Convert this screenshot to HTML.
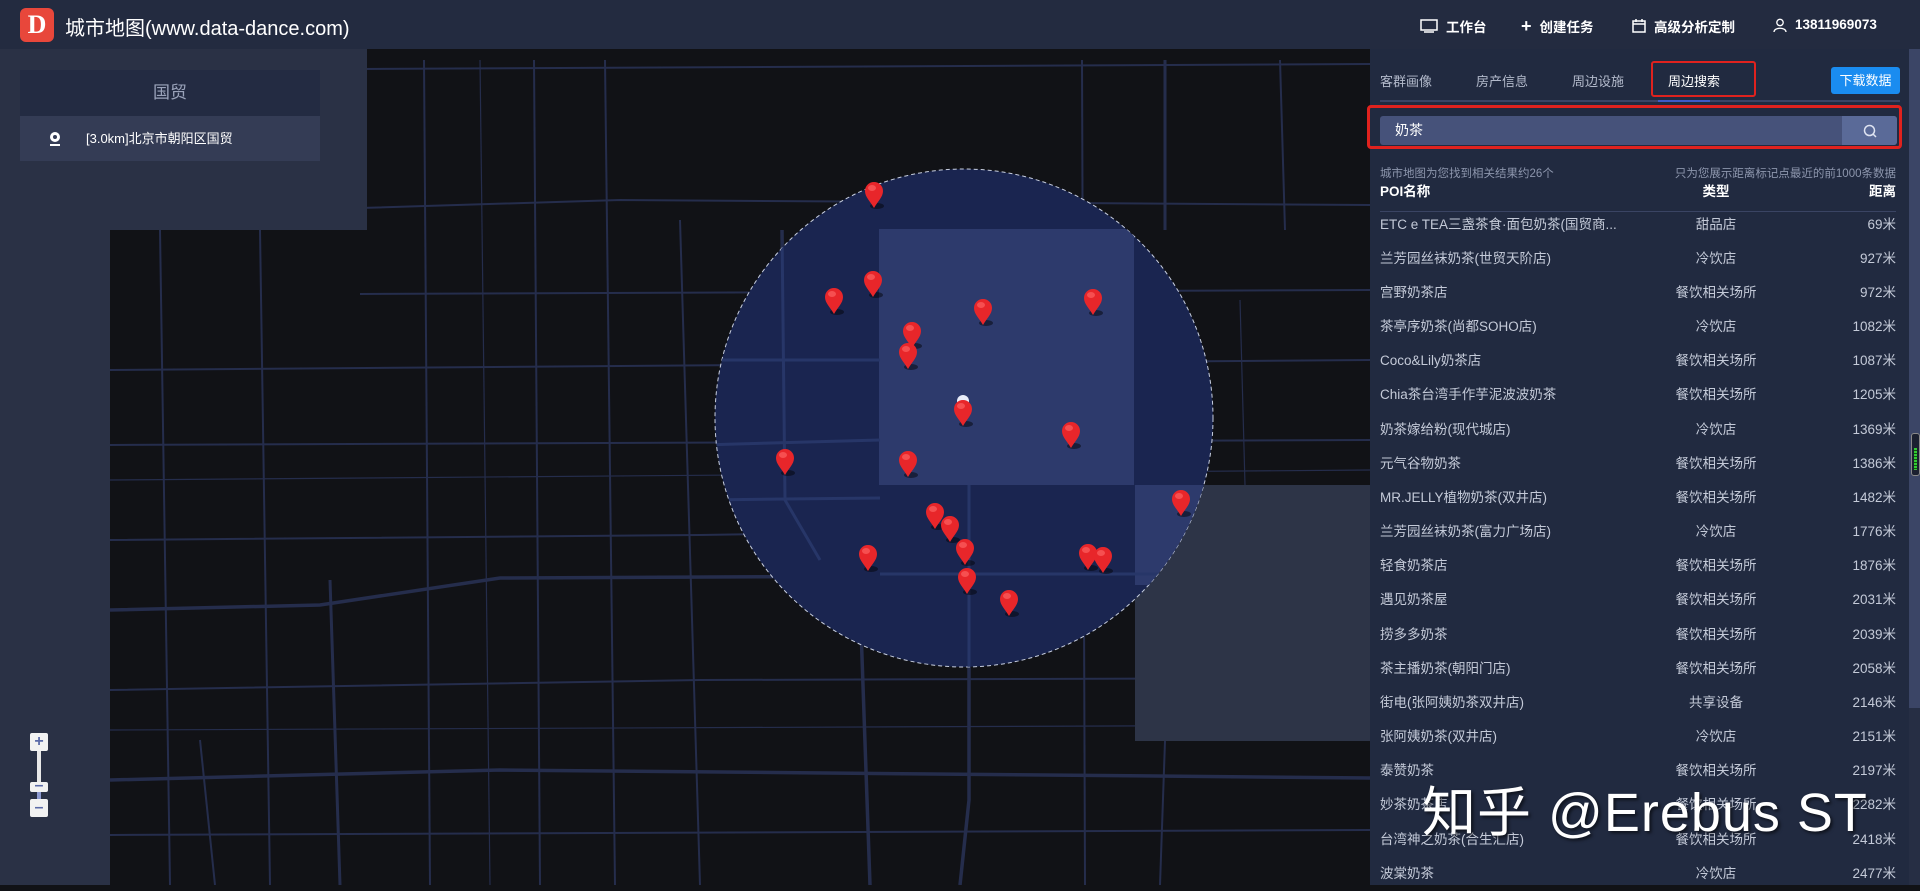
<!DOCTYPE html>
<html><head><meta charset="utf-8"><style>
*{margin:0;padding:0;box-sizing:border-box}
body{width:1920px;height:885px;overflow:hidden;background:#111216;font-family:"Liberation Sans","Noto Sans CJK SC",sans-serif;position:relative}
.hdr{position:absolute;left:0;top:0;width:1920px;height:49px;background:#232b40;color:#fff}
.logo{position:absolute;left:20px;top:8px;width:34px;height:34px;background:#e8473b;border-radius:6px;color:#fff;font-weight:bold;font-size:26px;line-height:34px;text-align:center;font-family:"Liberation Serif",serif}
.title{position:absolute;left:65px;top:12px;font-size:20px}
.nav{position:absolute;top:16px;font-size:13.5px;font-weight:bold;display:flex;align-items:center;gap:8px}
.left{position:absolute;left:0;top:49px;width:367px;height:181px;background:#2a3145}
.strip{position:absolute;left:0;top:230px;width:110px;height:655px;background:#2a3145}
.box1{position:absolute;left:20px;top:70px;width:300px;height:46px;background:#232b42;color:#9aa3ba;font-size:17px;text-align:center;line-height:46px}
.box2{position:absolute;left:20px;top:116px;width:300px;height:45px;background:#343c55;color:#fff;font-size:13px;line-height:45px;padding-left:66px}
.right{position:absolute;left:1370px;top:49px;width:539px;height:836px;background:#212a40;color:#c4cad8}
.tab{position:absolute;top:22px;font-size:13px;color:#b3bacb}
.row{position:absolute;left:10px;width:516px;height:34px;font-size:13.5px;line-height:34px;color:#c4cad8}
.row span{position:absolute}
.n{left:0}.t{left:220px;width:240px;text-align:center;margin-left:-4px}.d{right:0}
.zm{position:absolute;left:30px;width:18px;height:18px;background:#f2f2f2;border-radius:2px;color:#5a6aa8;font-size:16px;line-height:17px;text-align:center;font-weight:bold}
</style></head><body>
<svg style="position:absolute;left:0;top:0" width="1920" height="885">
<defs>
<symbol id="pin" viewBox="0 0 20 28"><ellipse cx="13" cy="25" rx="7" ry="3" fill="#000" opacity=".45"/><path d="M10 27 C6 20 1 16 1 10 A9 9 0 0 1 19 10 C19 16 14 20 10 27Z" fill="#e8262a"/><ellipse cx="8" cy="7" rx="4" ry="3" fill="#ff6a6a" opacity=".6"/></symbol>
</defs>
<g stroke="#252d4c" fill="none" stroke-width="2">
<path d="M360 69 L1370 64"/><path d="M110 370 L1370 360"/><path d="M110 445 L1370 440"/>
<path d="M110 540 L700 535 L1370 525"/>
<path d="M110 610 L320 605 L500 578 L1370 574" stroke-width="3.5"/>
<path d="M110 690 L700 680 L1370 678"/>
<path d="M110 780 L500 770 L1370 778" stroke-width="3.5"/>
<path d="M110 835 L1370 830"/>
<path d="M360 208 L620 200 L1370 205"/>
<path d="M360 294 L1370 290"/>
<path d="M782 230 L785 500 L820 560 L860 600 L870 885" stroke-width="3.5"/>
<path d="M969 485 L969 800 L960 885" stroke-width="3.5"/>
<path d="M424 60 L430 885"/><path d="M534 60 L540 885"/>
<path d="M605 60 L615 885"/><path d="M680 220 L700 885"/>
<path d="M1082 60 L1085 885"/><path d="M1165 60 L1165 230" stroke-width="3"/>
<path d="M1165 741 L1160 885"/><path d="M1280 60 L1285 230"/>
<path d="M160 230 L170 885"/><path d="M260 230 L270 885"/>
<path d="M200 740 L215 885"/><path d="M330 580 L340 885" stroke-width="3"/>
<path d="M110 480 L1370 470" stroke-width="1.2"/><path d="M110 730 L1370 725" stroke-width="1.2"/>
<path d="M480 60 L490 885" stroke-width="1.2"/><path d="M1240 300 L1245 485" stroke-width="1.2"/>
</g>
<rect x="1135" y="485" width="235" height="256" fill="#2d3447"/>
<circle cx="964" cy="418" r="249" fill="#1a2550" stroke="#c8cfe0" stroke-width="1" stroke-dasharray="4 3"/>
<clipPath id="c"><circle cx="964" cy="418" r="249"/></clipPath>
<g clip-path="url(#c)"><rect x="879" y="229" width="255" height="256" fill="#2d3a6c"/><rect x="1135" y="485" width="235" height="100" fill="#2d3a6c"/>
<g stroke="#273668" stroke-width="3" fill="none"><path d="M700 360 L880 360"/><path d="M700 445 L880 440"/><path d="M782 230 L785 500 L820 560"/><path d="M969 485 L969 700"/><path d="M880 574 L1200 574"/><path d="M700 500 L880 498"/></g></g>
<circle cx="963" cy="401" r="6" fill="#e8ecf8"/>
<g>
<use href="#pin" x="864" y="181" width="20" height="28"/><use href="#pin" x="824" y="287" width="20" height="28"/><use href="#pin" x="863" y="270" width="20" height="28"/><use href="#pin" x="902" y="321" width="20" height="28"/><use href="#pin" x="898" y="342" width="20" height="28"/><use href="#pin" x="973" y="298" width="20" height="28"/><use href="#pin" x="1083" y="288" width="20" height="28"/><use href="#pin" x="953" y="399" width="20" height="28"/><use href="#pin" x="1061" y="421" width="20" height="28"/><use href="#pin" x="898" y="450" width="20" height="28"/><use href="#pin" x="775" y="448" width="20" height="28"/><use href="#pin" x="1171" y="489" width="20" height="28"/><use href="#pin" x="925" y="502" width="20" height="28"/><use href="#pin" x="940" y="515" width="20" height="28"/><use href="#pin" x="955" y="538" width="20" height="28"/><use href="#pin" x="858" y="544" width="20" height="28"/><use href="#pin" x="1078" y="543" width="20" height="28"/><use href="#pin" x="1093" y="546" width="20" height="28"/><use href="#pin" x="957" y="567" width="20" height="28"/><use href="#pin" x="999" y="589" width="20" height="28"/>
</g>
</svg>
<div class="hdr"><div class="logo">D</div><div class="title">城市地图(www.data-dance.com)</div>
<div class="nav" style="left:1420px"><svg width="18" height="14"><rect x="1" y="1" width="16" height="10" fill="none" stroke="#fff" stroke-width="1.5"/><path d="M4 13H14" stroke="#fff" stroke-width="1.5"/></svg>工作台</div>
<div class="nav" style="left:1521px"><span style="font-size:18px;line-height:14px">+</span>创建任务</div>
<div class="nav" style="left:1632px"><svg width="14" height="14"><rect x="1" y="2" width="12" height="11" fill="none" stroke="#fff" stroke-width="1.5"/><path d="M1 5H13M4 0V3M10 0V3" stroke="#fff" stroke-width="1.5"/></svg>高级分析定制</div>
<div class="nav" style="left:1773px;top:17px"><svg width="14" height="14"><circle cx="7" cy="4.5" r="3.2" fill="none" stroke="#fff" stroke-width="1.3"/><path d="M1 14C1 9 13 9 13 14" fill="none" stroke="#fff" stroke-width="1.3"/></svg>13811969073</div>
</div>
<div class="left"></div><div class="strip"></div>
<div class="box1">国贸</div>
<div class="box2"><svg style="position:absolute;left:28px;top:15px" width="14" height="16"><circle cx="7" cy="6" r="5" fill="#fff"/><circle cx="7" cy="6" r="2" fill="#343c55"/><path d="M2 14H12" stroke="#fff" stroke-width="2"/></svg>[3.0km]北京市朝阳区国贸</div>
<div class="zm" style="top:733px">+</div><div style="position:absolute;left:37px;top:751px;width:4px;height:48px;background:#e8e8e8"></div><div style="position:absolute;left:37px;top:790px;width:4px;height:10px;background:#8d9ad0"></div><div class="zm" style="top:782px;height:10px;line-height:8px">–</div><div class="zm" style="top:799px">–</div>
<div class="right">
<div class="tab" style="left:10px">客群画像</div><div class="tab" style="left:106px">房产信息</div><div class="tab" style="left:202px">周边设施</div><div class="tab" style="left:298px;color:#fff">周边搜索</div>
<div style="position:absolute;left:281px;top:12px;width:105px;height:36px;border:2px solid #e0221e;border-radius:3px"></div>
<div style="position:absolute;left:461px;top:18px;width:69px;height:27px;background:#1a8cf0;border-radius:3px;color:#fff;font-size:13px;line-height:27px;text-align:center">下载数据</div>
<div style="position:absolute;left:10px;top:51px;width:520px;height:2px;background:#3a4565"></div>
<div style="position:absolute;left:288px;top:51px;width:52px;height:2px;background:#3d5ac8"></div>
<div style="position:absolute;left:-3px;top:56px;width:535px;height:44px;border:3px solid #e0221e;border-radius:4px"></div>
<div style="position:absolute;left:10px;top:67px;width:517px;height:29px;background:#46527a;border-radius:3px;color:#fff;font-size:14px;line-height:28px;padding-left:15px">奶茶</div>
<div style="position:absolute;left:472px;top:67px;width:55px;height:29px;background:#5a6a98;border-radius:0 3px 3px 0"><svg style="position:absolute;left:21px;top:8px" width="14" height="14"><circle cx="6.5" cy="6.5" r="5" fill="none" stroke="#dfe4f2" stroke-width="1.5"/><path d="M10 10L13 13" stroke="#dfe4f2" stroke-width="1.5"/></svg></div>
<div style="position:absolute;left:10px;top:116px;font-size:11.5px;color:#8d96ad">城市地图为您找到相关结果约26个</div>
<div style="position:absolute;right:13px;top:116px;font-size:11.5px;color:#8d96ad">只为您展示距离标记点最近的前1000条数据</div>
<div class="row" style="top:126px;font-weight:bold;color:#fff"><span class="n">POI名称</span><span class="t">类型</span><span class="d">距离</span></div>
<div style="position:absolute;left:10px;top:162px;width:516px;height:1px;background:#3a4463"></div>
<div class="row" style="top:159px"><span class="n">ETC e TEA三盏茶食·面包奶茶(国贸商...</span><span class="t">甜品店</span><span class="d">69米</span></div>
<div class="row" style="top:193px"><span class="n">兰芳园丝袜奶茶(世贸天阶店)</span><span class="t">冷饮店</span><span class="d">927米</span></div>
<div class="row" style="top:227px"><span class="n">宫野奶茶店</span><span class="t">餐饮相关场所</span><span class="d">972米</span></div>
<div class="row" style="top:261px"><span class="n">茶亭序奶茶(尚都SOHO店)</span><span class="t">冷饮店</span><span class="d">1082米</span></div>
<div class="row" style="top:295px"><span class="n">Coco&amp;Lily奶茶店</span><span class="t">餐饮相关场所</span><span class="d">1087米</span></div>
<div class="row" style="top:329px"><span class="n">Chia茶台湾手作芋泥波波奶茶</span><span class="t">餐饮相关场所</span><span class="d">1205米</span></div>
<div class="row" style="top:364px"><span class="n">奶茶嫁给粉(现代城店)</span><span class="t">冷饮店</span><span class="d">1369米</span></div>
<div class="row" style="top:398px"><span class="n">元气谷物奶茶</span><span class="t">餐饮相关场所</span><span class="d">1386米</span></div>
<div class="row" style="top:432px"><span class="n">MR.JELLY植物奶茶(双井店)</span><span class="t">餐饮相关场所</span><span class="d">1482米</span></div>
<div class="row" style="top:466px"><span class="n">兰芳园丝袜奶茶(富力广场店)</span><span class="t">冷饮店</span><span class="d">1776米</span></div>
<div class="row" style="top:500px"><span class="n">轻食奶茶店</span><span class="t">餐饮相关场所</span><span class="d">1876米</span></div>
<div class="row" style="top:534px"><span class="n">遇见奶茶屋</span><span class="t">餐饮相关场所</span><span class="d">2031米</span></div>
<div class="row" style="top:569px"><span class="n">捞多多奶茶</span><span class="t">餐饮相关场所</span><span class="d">2039米</span></div>
<div class="row" style="top:603px"><span class="n">茶主播奶茶(朝阳门店)</span><span class="t">餐饮相关场所</span><span class="d">2058米</span></div>
<div class="row" style="top:637px"><span class="n">街电(张阿姨奶茶双井店)</span><span class="t">共享设备</span><span class="d">2146米</span></div>
<div class="row" style="top:671px"><span class="n">张阿姨奶茶(双井店)</span><span class="t">冷饮店</span><span class="d">2151米</span></div>
<div class="row" style="top:705px"><span class="n">泰赞奶茶</span><span class="t">餐饮相关场所</span><span class="d">2197米</span></div>
<div class="row" style="top:739px"><span class="n">妙茶奶茶店</span><span class="t">餐饮相关场所</span><span class="d">2282米</span></div>
<div class="row" style="top:774px"><span class="n">台湾神之奶茶(合生汇店)</span><span class="t">餐饮相关场所</span><span class="d">2418米</span></div>
<div class="row" style="top:808px"><span class="n">波棠奶茶</span><span class="t">冷饮店</span><span class="d">2477米</span></div>
</div>
<div style="position:absolute;left:1909px;top:49px;width:11px;height:659px;background:#3b4566"></div>
<div style="position:absolute;left:1909px;top:708px;width:11px;height:177px;background:#262e44"></div>
<div style="position:absolute;left:1911px;top:433px;width:9px;height:43px;background:#1b2030;border:1px solid #888;border-radius:3px"><div style="margin:14px 2px 0;height:22px;background:repeating-linear-gradient(#3c3 0 2px,#151 2px 3px)"></div></div>
<div style="position:absolute;left:1422px;top:768px;font-size:54px;color:#fff;font-family:'Liberation Sans','Noto Sans CJK SC',sans-serif;text-shadow:2px 2px 3px rgba(0,0,0,.6);white-space:nowrap;letter-spacing:1px">知乎 @Erebus ST</div>
</body></html>
